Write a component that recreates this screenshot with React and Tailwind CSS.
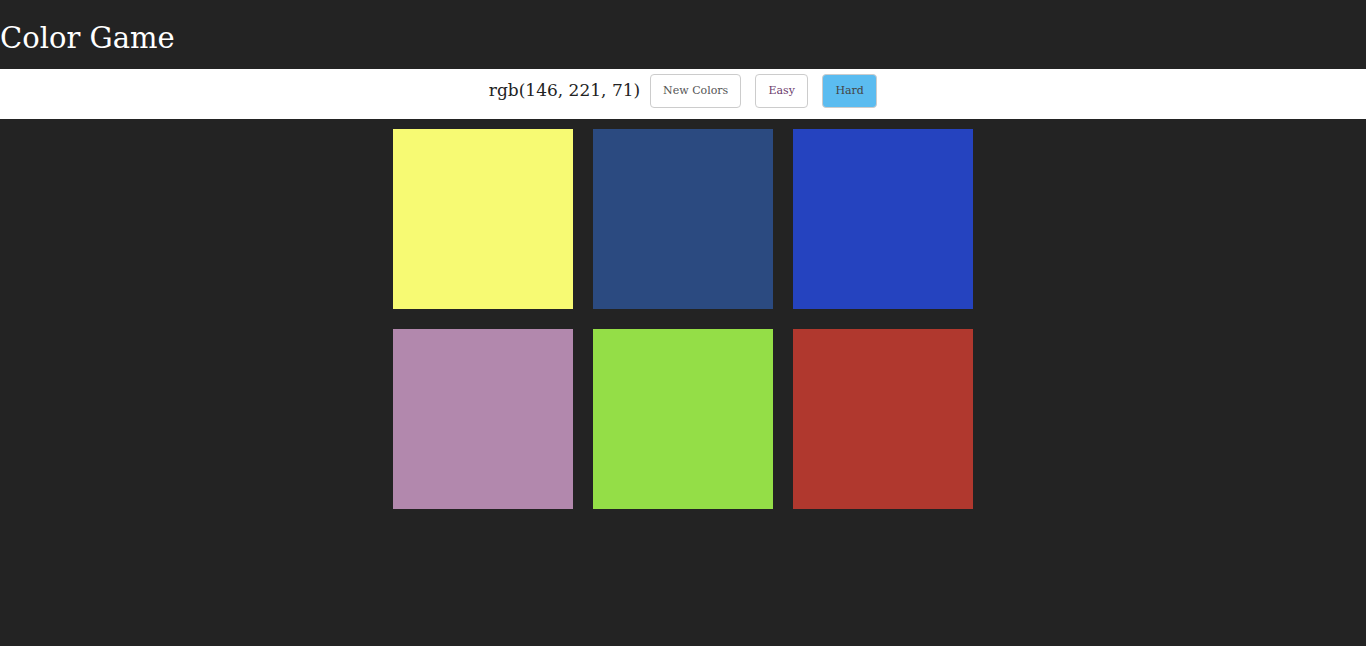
import React from 'react'

const colors = ['#f7fa73', '#2b4a80', '#2543bf', '#b288ad', '#94de47', '#b0382e']

const App = () => {
       return (
              <div className="min-h-[646px] bg-[#232323] font-['DejaVu_Serif',serif]">
                     {/* Header */}
                     <div className="h-[69px] flex items-end pb-[16px]">
                            <h1 className="text-[29px] leading-none text-white">Color Game</h1>
                     </div>

                     {/* Controls */}
                     <div className="h-[50px] bg-white flex items-start justify-center pt-[5px]">
                            <span className="text-[17px] leading-[32px] text-[#222] mr-[10px]">rgb(146, 221, 71)</span>
                            <button className="w-[91px] h-[34px] border border-[#ccc] rounded text-[11px] text-[#555] bg-white mr-[14px]">New Colors</button>
                            <button className="w-[53px] h-[34px] border border-[#ccc] rounded text-[11px] text-[#6b3a6b] bg-white mr-[14px]">Easy</button>
                            <button className="w-[55px] h-[34px] border border-[#ccc] rounded text-[11px] text-[#444] bg-[#5bbcf0]">Hard</button>
                     </div>

                     {/* Squares */}
                     <div className="w-[600px] mx-auto pt-[10px] flex flex-wrap">
                            {colors.map((c, i) => (
                                   <div key={i} className="w-[180px] h-[180px] mx-[10px] mb-[20px]" style={{ backgroundColor: c }} />
                            ))}
                     </div>
              </div>
       )
}

export default App
